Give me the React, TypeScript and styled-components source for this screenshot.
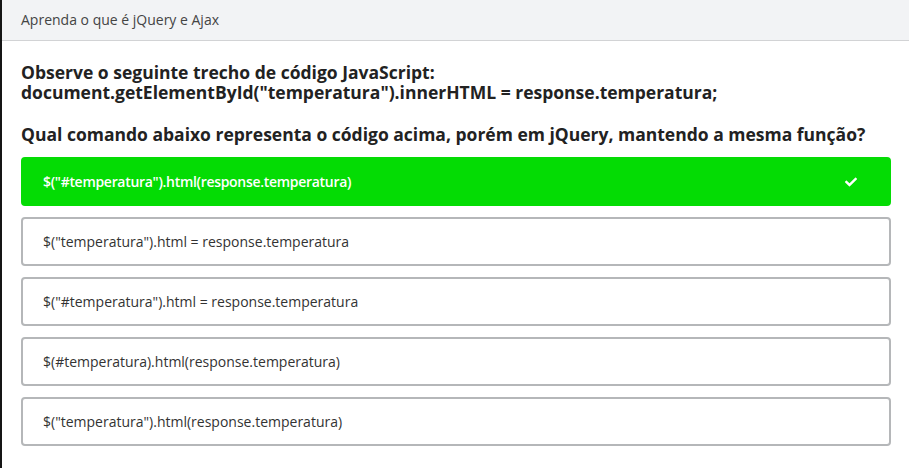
import React from "react";
import styled, { createGlobalStyle } from "styled-components";
import { FaCheck } from "react-icons/fa";

const Global = createGlobalStyle`
  html, body { margin: 0; padding: 0; background: #fff; }
  body { font-family: "Open Sans", "Noto Sans", sans-serif; }
  * { box-sizing: border-box; }
`;

const Page = styled.div`
  width: 909px;
  height: 468px;
  border-left: 2px solid #151515;
  background: #fff;
  display: flex;
  flex-direction: column;
`;

const Header = styled.div`
  height: 41px;
  background: #f2f3f5;
  border-bottom: 1px solid #d2d3d5;
  display: flex;
  align-items: center;
  padding: 0 19px 2px;
  font-size: 14px;
  color: #444;
`;

const Body = styled.div`
  padding: 21px 19px 0;
  display: flex;
  flex-direction: column;
`;

const Statement = styled.p`
  margin: 0;
  font-size: 17.5px;
  line-height: 20px;
  font-weight: 700;
  color: #222;
`;

const Question = styled(Statement)`
  margin-top: 22px;
`;

const Options = styled.div`
  margin-top: 13px;
  display: flex;
  flex-direction: column;
  gap: 11px;
`;

const Option = styled.div<{ $correct?: boolean }>`
  height: 49px;
  width: 870px;
  border-radius: 4px;
  border: 2px solid ${(p) => (p.$correct ? "#04dc04" : "#b5b7b9")};
  background: ${(p) => (p.$correct ? "#04dc04" : "#fff")};
  color: ${(p) => (p.$correct ? "#fff" : "#333")};
  font-weight: ${(p) => (p.$correct ? 600 : 400)};
  letter-spacing: ${(p) => (p.$correct ? "-0.3px" : "0")};
  font-size: 14px;
  display: flex;
  align-items: center;
  justify-content: space-between;
  padding: 0 32px 0 20px;
`;

const Check = styled.span`
  display: flex;
  color: #fff;
`;

const options = [
  { text: '$("#temperatura").html(response.temperatura)', correct: true },
  { text: '$("temperatura").html = response.temperatura' },
  { text: '$("#temperatura").html = response.temperatura' },
  { text: "$(#temperatura).html(response.temperatura)" },
  { text: '$("temperatura").html(response.temperatura)' },
];

export default function App() {
  return (
    <>
      <Global />
      <Page>
        <Header>Aprenda o que é jQuery e Ajax</Header>
        <Body>
          <Statement>
            Observe o seguinte trecho de código JavaScript:
            <br />
            document.getElementById("temperatura").innerHTML = response.temperatura;
          </Statement>
          <Question>
            Qual comando abaixo representa o código acima, porém em jQuery, mantendo a mesma função?
          </Question>
          <Options>
            {options.map((o) => (
              <Option key={o.text} $correct={o.correct}>
                <span>{o.text}</span>
                {o.correct && (
                  <Check>
                    <FaCheck size={12} />
                  </Check>
                )}
              </Option>
            ))}
          </Options>
        </Body>
      </Page>
    </>
  );
}
